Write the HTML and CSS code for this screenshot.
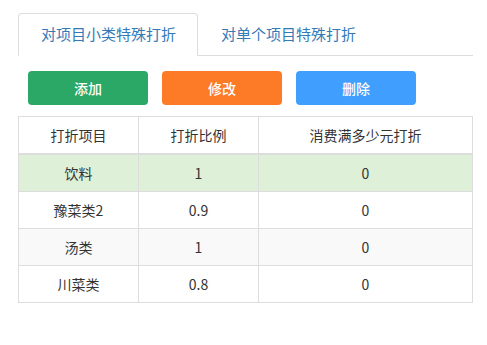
FILE: index.html
```html
<!DOCTYPE html>
<html lang="zh-CN">
<head>
    <meta charset="UTF-8">
    <meta name="viewport" content="width=device-width, initial-scale=1.0">
    <title>特殊打折</title>
    <link rel="stylesheet" href="styles.css">
</head>
<body>
    <div class="container">
        <ul class="tabs">
            <li class="active"><a href="#">对项目小类特殊打折</a></li>
            <li><a href="#">对单个项目特殊打折</a></li>
        </ul>
        <div class="toolbar">
            <button class="btn btn-add">添加</button>
            <button class="btn btn-edit">修改</button>
            <button class="btn btn-delete">删除</button>
        </div>
        <table class="discount-table">
            <colgroup>
                <col class="col-narrow">
                <col class="col-narrow">
                <col>
            </colgroup>
            <thead>
                <tr>
                    <th>打折项目</th>
                    <th>打折比例</th>
                    <th>消费满多少元打折</th>
                </tr>
            </thead>
            <tbody>
                <tr class="selected">
                    <td>饮料</td>
                    <td>1</td>
                    <td>0</td>
                </tr>
                <tr>
                    <td>豫菜类2</td>
                    <td>0.9</td>
                    <td>0</td>
                </tr>
                <tr class="striped">
                    <td>汤类</td>
                    <td>1</td>
                    <td>0</td>
                </tr>
                <tr>
                    <td>川菜类</td>
                    <td>0.8</td>
                    <td>0</td>
                </tr>
            </tbody>
        </table>
    </div>
</body>
</html>
```

FILE: styles.css
```css
body {
    margin: 0;
    font-family: "Noto Sans CJK SC", "Noto Sans", sans-serif;
    font-size: 14px;
    color: #333;
    background-color: #fff;
}
.container {
    width: 455px;
    padding: 13px 0 0 18px;
}
.tabs {
    list-style: none;
    margin: 0;
    padding: 0;
    display: flex;
    border-bottom: 1px solid #ddd;
}
.tabs li {
    margin-bottom: -1px;
}
.tabs a {
    display: block;
    padding: 10px 21px 11px 22px;
    line-height: 20px;
    font-size: 15px;
    color: #337ab7;
    text-decoration: none;
    border: 1px solid transparent;
    border-radius: 4px 4px 0 0;
}
.tabs li.active a {
    background-color: #fff;
    border-color: #ddd;
    border-bottom-color: transparent;
}
.toolbar {
    display: flex;
    gap: 14px;
    margin: 15px 0 11px 10px;
}
.btn {
    width: 120px;
    height: 34px;
    border: none;
    border-radius: 4px;
    color: #fff;
    font-family: inherit;
    font-size: 14px;
    font-weight: 500;
    cursor: pointer;
}
.btn-add {
    background-color: #2ca866;
}
.btn-edit {
    background-color: #fd7a27;
}
.btn-delete {
    background-color: #409eff;
}
.discount-table {
    width: 455px;
    border-collapse: collapse;
    table-layout: fixed;
}
.col-narrow {
    width: 120px;
}
.discount-table th,
.discount-table td {
    border: 1px solid #ddd;
    padding: 8px;
    line-height: 20px;
    text-align: center;
    font-weight: normal;
}
.discount-table th {
    border-bottom-width: 2px;
}
.discount-table tr.selected td {
    background-color: #dff0d8;
}
.discount-table tr.striped td {
    background-color: #f9f9f9;
}
```
